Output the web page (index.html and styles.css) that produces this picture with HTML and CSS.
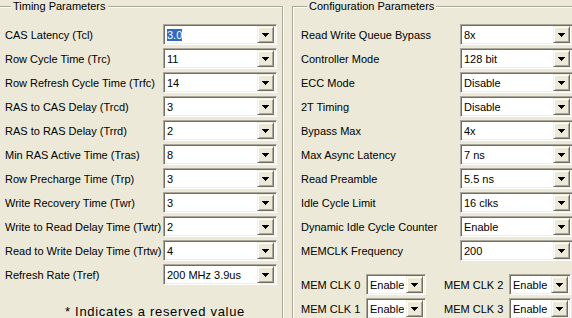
FILE: index.html
```html
<!DOCTYPE html>
<html lang="en">
<head>
  <meta charset="UTF-8" />
  <meta name="viewport" content="width=device-width, initial-scale=1.0"/>
  <title>Memory Settings</title>
  <link rel="stylesheet" href="styles.css">
</head>
<body>

  <div class="dialog">

    <fieldset class="group timing">
      <legend>Timing Parameters</legend>
      <div class="rows">
        <div class="row"><label>CAS Latency (Tcl)</label><div class="combo"><span class="value"><span class="sel">3.0</span></span><span class="drop"><svg width="7" height="4" viewBox="0 0 7 4"><path d="M0 0h7v1h-1v1h-1v1h-1v1h-1v-1h-1v-1h-1v-1h-1z"/></svg></span></div></div>
        <div class="row"><label>Row Cycle Time (Trc)</label><div class="combo"><span class="value">11</span><span class="drop"><svg width="7" height="4" viewBox="0 0 7 4"><path d="M0 0h7v1h-1v1h-1v1h-1v1h-1v-1h-1v-1h-1v-1h-1z"/></svg></span></div></div>
        <div class="row"><label>Row Refresh Cycle Time (Trfc)</label><div class="combo"><span class="value">14</span><span class="drop"><svg width="7" height="4" viewBox="0 0 7 4"><path d="M0 0h7v1h-1v1h-1v1h-1v1h-1v-1h-1v-1h-1v-1h-1z"/></svg></span></div></div>
        <div class="row"><label>RAS to CAS Delay (Trcd)</label><div class="combo"><span class="value">3</span><span class="drop"><svg width="7" height="4" viewBox="0 0 7 4"><path d="M0 0h7v1h-1v1h-1v1h-1v1h-1v-1h-1v-1h-1v-1h-1z"/></svg></span></div></div>
        <div class="row"><label>RAS to RAS Delay (Trrd)</label><div class="combo"><span class="value">2</span><span class="drop"><svg width="7" height="4" viewBox="0 0 7 4"><path d="M0 0h7v1h-1v1h-1v1h-1v1h-1v-1h-1v-1h-1v-1h-1z"/></svg></span></div></div>
        <div class="row"><label>Min RAS Active Time (Tras)</label><div class="combo"><span class="value">8</span><span class="drop"><svg width="7" height="4" viewBox="0 0 7 4"><path d="M0 0h7v1h-1v1h-1v1h-1v1h-1v-1h-1v-1h-1v-1h-1z"/></svg></span></div></div>
        <div class="row"><label>Row Precharge Time (Trp)</label><div class="combo"><span class="value">3</span><span class="drop"><svg width="7" height="4" viewBox="0 0 7 4"><path d="M0 0h7v1h-1v1h-1v1h-1v1h-1v-1h-1v-1h-1v-1h-1z"/></svg></span></div></div>
        <div class="row"><label>Write Recovery Time (Twr)</label><div class="combo"><span class="value">3</span><span class="drop"><svg width="7" height="4" viewBox="0 0 7 4"><path d="M0 0h7v1h-1v1h-1v1h-1v1h-1v-1h-1v-1h-1v-1h-1z"/></svg></span></div></div>
        <div class="row"><label>Write to Read Delay Time (Twtr)</label><div class="combo"><span class="value">2</span><span class="drop"><svg width="7" height="4" viewBox="0 0 7 4"><path d="M0 0h7v1h-1v1h-1v1h-1v1h-1v-1h-1v-1h-1v-1h-1z"/></svg></span></div></div>
        <div class="row"><label>Read to Write Delay Time (Trtw)</label><div class="combo"><span class="value">4</span><span class="drop"><svg width="7" height="4" viewBox="0 0 7 4"><path d="M0 0h7v1h-1v1h-1v1h-1v1h-1v-1h-1v-1h-1v-1h-1z"/></svg></span></div></div>
        <div class="row"><label>Refresh Rate (Tref)</label><div class="combo"><span class="value">200 MHz 3.9us</span><span class="drop"><svg width="7" height="4" viewBox="0 0 7 4"><path d="M0 0h7v1h-1v1h-1v1h-1v1h-1v-1h-1v-1h-1v-1h-1z"/></svg></span></div></div>
      </div>
      <p class="note">* Indicates a reserved value</p>
    </fieldset>

    <fieldset class="group config">
      <legend>Configuration Parameters</legend>
      <div class="rows">
        <div class="row"><label>Read Write Queue Bypass</label><div class="combo"><span class="value">8x</span><span class="drop"><svg width="7" height="4" viewBox="0 0 7 4"><path d="M0 0h7v1h-1v1h-1v1h-1v1h-1v-1h-1v-1h-1v-1h-1z"/></svg></span></div></div>
        <div class="row"><label>Controller Mode</label><div class="combo"><span class="value">128 bit</span><span class="drop"><svg width="7" height="4" viewBox="0 0 7 4"><path d="M0 0h7v1h-1v1h-1v1h-1v1h-1v-1h-1v-1h-1v-1h-1z"/></svg></span></div></div>
        <div class="row"><label>ECC Mode</label><div class="combo"><span class="value">Disable</span><span class="drop"><svg width="7" height="4" viewBox="0 0 7 4"><path d="M0 0h7v1h-1v1h-1v1h-1v1h-1v-1h-1v-1h-1v-1h-1z"/></svg></span></div></div>
        <div class="row"><label>2T Timing</label><div class="combo"><span class="value">Disable</span><span class="drop"><svg width="7" height="4" viewBox="0 0 7 4"><path d="M0 0h7v1h-1v1h-1v1h-1v1h-1v-1h-1v-1h-1v-1h-1z"/></svg></span></div></div>
        <div class="row"><label>Bypass Max</label><div class="combo"><span class="value">4x</span><span class="drop"><svg width="7" height="4" viewBox="0 0 7 4"><path d="M0 0h7v1h-1v1h-1v1h-1v1h-1v-1h-1v-1h-1v-1h-1z"/></svg></span></div></div>
        <div class="row"><label>Max Async Latency</label><div class="combo"><span class="value">7 ns</span><span class="drop"><svg width="7" height="4" viewBox="0 0 7 4"><path d="M0 0h7v1h-1v1h-1v1h-1v1h-1v-1h-1v-1h-1v-1h-1z"/></svg></span></div></div>
        <div class="row"><label>Read Preamble</label><div class="combo"><span class="value">5.5 ns</span><span class="drop"><svg width="7" height="4" viewBox="0 0 7 4"><path d="M0 0h7v1h-1v1h-1v1h-1v1h-1v-1h-1v-1h-1v-1h-1z"/></svg></span></div></div>
        <div class="row"><label>Idle Cycle Limit</label><div class="combo"><span class="value">16 clks</span><span class="drop"><svg width="7" height="4" viewBox="0 0 7 4"><path d="M0 0h7v1h-1v1h-1v1h-1v1h-1v-1h-1v-1h-1v-1h-1z"/></svg></span></div></div>
        <div class="row"><label>Dynamic Idle Cycle Counter</label><div class="combo"><span class="value">Enable</span><span class="drop"><svg width="7" height="4" viewBox="0 0 7 4"><path d="M0 0h7v1h-1v1h-1v1h-1v1h-1v-1h-1v-1h-1v-1h-1z"/></svg></span></div></div>
        <div class="row"><label>MEMCLK Frequency</label><div class="combo"><span class="value">200</span><span class="drop"><svg width="7" height="4" viewBox="0 0 7 4"><path d="M0 0h7v1h-1v1h-1v1h-1v1h-1v-1h-1v-1h-1v-1h-1z"/></svg></span></div></div>
      </div>

      <div class="clocks">
        <label>MEM CLK 0</label><div class="combo"><span class="value">Enable</span><span class="drop"><svg width="7" height="4" viewBox="0 0 7 4"><path d="M0 0h7v1h-1v1h-1v1h-1v1h-1v-1h-1v-1h-1v-1h-1z"/></svg></span></div>
        <label class="right">MEM CLK 2</label><div class="combo"><span class="value">Enable</span><span class="drop"><svg width="7" height="4" viewBox="0 0 7 4"><path d="M0 0h7v1h-1v1h-1v1h-1v1h-1v-1h-1v-1h-1v-1h-1z"/></svg></span></div>
        <label>MEM CLK 1</label><div class="combo"><span class="value">Enable</span><span class="drop"><svg width="7" height="4" viewBox="0 0 7 4"><path d="M0 0h7v1h-1v1h-1v1h-1v1h-1v-1h-1v-1h-1v-1h-1z"/></svg></span></div>
        <label class="right">MEM CLK 3</label><div class="combo"><span class="value">Enable</span><span class="drop"><svg width="7" height="4" viewBox="0 0 7 4"><path d="M0 0h7v1h-1v1h-1v1h-1v1h-1v-1h-1v-1h-1v-1h-1z"/></svg></span></div>
      </div>
    </fieldset>

  </div>

</body>
</html>
```
FILE: styles.css
```css
body {
  margin: 0;
  background: #ece9d8;
  font-family: 'Liberation Sans', Arial, sans-serif;
  font-size: 11px;
  color: #000;
  overflow: hidden;
}
.dialog {
  display: flex;
  gap: 9px;
  margin-left: -4px;
  width: 576px;
  height: 318px;
  overflow: hidden;
}
.group {
  margin: 0;
  padding: 11px 5px 0 8px;
  border: 1px solid #aca899;
  border-bottom: 0;
  box-shadow: 1px 0 0 #fff, inset 1px 1px 0 #fff;
  box-sizing: border-box;
  min-width: 0;
  flex: none;
  height: 318px;
}
.group legend {
  margin-left: 6px;
  padding: 0 2px;
  line-height: 13px;
  background: #ece9d8;
}
.timing {
  width: 287px;
}
.config {
  width: 284px;
  border-right: 0;
  box-shadow: inset 1px 1px 0 #fff;
  padding-right: 0;
}

.rows {
  display: flex;
  flex-direction: column;
  gap: 3px;
}
.row {
  display: flex;
  align-items: center;
  height: 21px;
}
.row label {
  width: 158px;
  flex: none;
  white-space: nowrap;
}
.config .row label {
  width: 159px;
}

.combo {
  display: flex;
  align-items: center;
  width: 114px;
  height: 21px;
  padding: 2px;
  box-sizing: border-box;
  border: 1px solid;
  border-color: #aca899 #fff #fff #aca899;
  box-shadow: inset 1px 1px 0 #716f64, inset -1px -1px 0 #f1efe2;
  background: #fff;
}
.config .combo {
  width: 113px;
}
.combo .value {
  flex: 1;
  padding-left: 1px;
  white-space: nowrap;
  overflow: hidden;
}
.combo .sel {
  background: #316ac5;
  color: #fff;
  padding: 1px 0;
}
.combo .drop {
  flex: none;
  width: 17px;
  height: 17px;
  box-sizing: border-box;
  display: flex;
  align-items: center;
  justify-content: center;
  background: #ece9d8;
  border: 1px solid;
  border-color: #f1efe2 #716f64 #716f64 #f1efe2;
  box-shadow: inset 1px 1px 0 #fff, inset -1px -1px 0 #aca899;
}
.combo .drop svg {
  display: block;
  fill: #000;
  shape-rendering: crispEdges;
}

.note {
  margin: 19px 0 0 60px;
  font-size: 13px;
  letter-spacing: 0.7px;
  line-height: 15px;
}

.clocks {
  display: grid;
  grid-template-columns: 65px 60px 83px 62px;
  row-gap: 3px;
  margin-top: 13px;
  align-items: center;
}
.clocks label {
  white-space: nowrap;
}
.clocks label.right {
  padding-left: 18px;
}
.clocks .combo,
.config .clocks .combo {
  width: auto;
}
```
